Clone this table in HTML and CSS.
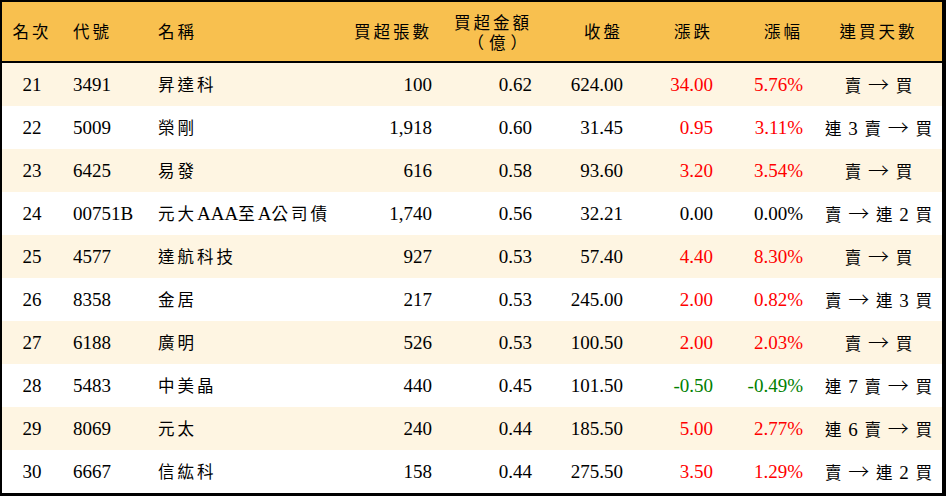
FILE: index.html
```html
<!DOCTYPE html>
<html lang="zh-Hant">
<head>
<meta charset="utf-8">
<title>買超排行</title>
<link rel="stylesheet" href="styles.css">
</head>
<body>
<table class="rank">
  <colgroup>
    <col class="w-rank"><col class="w-code"><col class="w-name"><col class="w-vol"><col class="w-amt"><col class="w-close"><col class="w-chg"><col class="w-pct"><col class="w-days">
  </colgroup>
  <thead>
    <tr>
      <th class="ctr"><span class="zh">名次</span></th>
      <th class="lft pl-code"><span class="zh">代號</span></th>
      <th class="lft pl-name"><span class="zh">名稱</span></th>
      <th class="rgt"><span class="zh">買超張數</span></th>
      <th class="rgt"><span class="hl zh">買超金額</span><span class="hl zh paren">（億）</span></th>
      <th class="rgt"><span class="zh">收盤</span></th>
      <th class="rgt"><span class="zh">漲跌</span></th>
      <th class="rgt"><span class="zh">漲幅</span></th>
      <th class="days"><span class="zh">連買天數</span></th>
    </tr>
  </thead>
  <tbody>
    <tr class="alt">
      <td class="ctr">21</td><td class="lft pl-code">3491</td><td class="lft pl-name"><span class="zh">昇達科</span></td>
      <td class="rgt">100</td><td class="rgt">0.62</td><td class="rgt">624.00</td>
      <td class="rgt up">34.00</td><td class="rgt up">5.76%</td>
      <td class="days"><span class="zh">賣</span> <span class="arr">→</span> <span class="zh">買</span></td>
    </tr>
    <tr>
      <td class="ctr">22</td><td class="lft pl-code">5009</td><td class="lft pl-name"><span class="zh">榮剛</span></td>
      <td class="rgt">1,918</td><td class="rgt">0.60</td><td class="rgt">31.45</td>
      <td class="rgt up">0.95</td><td class="rgt up">3.11%</td>
      <td class="days"><span class="zh">連</span> 3 <span class="zh">賣</span> <span class="arr">→</span> <span class="zh">買</span></td>
    </tr>
    <tr class="alt">
      <td class="ctr">23</td><td class="lft pl-code">6425</td><td class="lft pl-name"><span class="zh">易發</span></td>
      <td class="rgt">616</td><td class="rgt">0.58</td><td class="rgt">93.60</td>
      <td class="rgt up">3.20</td><td class="rgt up">3.54%</td>
      <td class="days"><span class="zh">賣</span> <span class="arr">→</span> <span class="zh">買</span></td>
    </tr>
    <tr>
      <td class="ctr">24</td><td class="lft pl-code">00751B</td><td class="lft pl-name"><span class="zh">元大</span>AAA<span class="zh">至</span>A<span class="zh">公司債</span></td>
      <td class="rgt">1,740</td><td class="rgt">0.56</td><td class="rgt">32.21</td>
      <td class="rgt">0.00</td><td class="rgt">0.00%</td>
      <td class="days"><span class="zh">賣</span> <span class="arr">→</span> <span class="zh">連</span> 2 <span class="zh">買</span></td>
    </tr>
    <tr class="alt">
      <td class="ctr">25</td><td class="lft pl-code">4577</td><td class="lft pl-name"><span class="zh">達航科技</span></td>
      <td class="rgt">927</td><td class="rgt">0.53</td><td class="rgt">57.40</td>
      <td class="rgt up">4.40</td><td class="rgt up">8.30%</td>
      <td class="days"><span class="zh">賣</span> <span class="arr">→</span> <span class="zh">買</span></td>
    </tr>
    <tr>
      <td class="ctr">26</td><td class="lft pl-code">8358</td><td class="lft pl-name"><span class="zh">金居</span></td>
      <td class="rgt">217</td><td class="rgt">0.53</td><td class="rgt">245.00</td>
      <td class="rgt up">2.00</td><td class="rgt up">0.82%</td>
      <td class="days"><span class="zh">賣</span> <span class="arr">→</span> <span class="zh">連</span> 3 <span class="zh">買</span></td>
    </tr>
    <tr class="alt">
      <td class="ctr">27</td><td class="lft pl-code">6188</td><td class="lft pl-name"><span class="zh">廣明</span></td>
      <td class="rgt">526</td><td class="rgt">0.53</td><td class="rgt">100.50</td>
      <td class="rgt up">2.00</td><td class="rgt up">2.03%</td>
      <td class="days"><span class="zh">賣</span> <span class="arr">→</span> <span class="zh">買</span></td>
    </tr>
    <tr>
      <td class="ctr">28</td><td class="lft pl-code">5483</td><td class="lft pl-name"><span class="zh">中美晶</span></td>
      <td class="rgt">440</td><td class="rgt">0.45</td><td class="rgt">101.50</td>
      <td class="rgt down">-0.50</td><td class="rgt down">-0.49%</td>
      <td class="days"><span class="zh">連</span> 7 <span class="zh">賣</span> <span class="arr">→</span> <span class="zh">買</span></td>
    </tr>
    <tr class="alt">
      <td class="ctr">29</td><td class="lft pl-code">8069</td><td class="lft pl-name"><span class="zh">元太</span></td>
      <td class="rgt">240</td><td class="rgt">0.44</td><td class="rgt">185.50</td>
      <td class="rgt up">5.00</td><td class="rgt up">2.77%</td>
      <td class="days"><span class="zh">連</span> 6 <span class="zh">賣</span> <span class="arr">→</span> <span class="zh">買</span></td>
    </tr>
    <tr>
      <td class="ctr">30</td><td class="lft pl-code">6667</td><td class="lft pl-name"><span class="zh">信紘科</span></td>
      <td class="rgt">158</td><td class="rgt">0.44</td><td class="rgt">275.50</td>
      <td class="rgt up">3.50</td><td class="rgt up">1.29%</td>
      <td class="days"><span class="zh">賣</span> <span class="arr">→</span> <span class="zh">連</span> 2 <span class="zh">買</span></td>
    </tr>
  </tbody>
</table>
</body>
</html>
```

FILE: styles.css
```css
html, body {
  margin: 0;
  padding: 0;
  background: #ffffff;
}

body {
  font-family: "Liberation Serif", "Noto Sans CJK TC", serif;
  font-size: 19px;
  color: #000000;
}

.rank {
  width: 946px;
  border-collapse: separate;
  border-spacing: 0;
  table-layout: fixed;
  border-style: solid;
  border-color: #000000;
  border-width: 2px 4px 4px 2px;
  box-sizing: border-box;
}

.w-rank { width: 60px; }
.w-code { width: 86px; }
.w-name { width: 192px; }
.w-vol { width: 102px; }
.w-amt { width: 100px; }
.w-close { width: 91px; }
.w-chg { width: 90px; }
.w-pct { width: 90px; }
.w-days { width: 129px; }

.rank th {
  background: #f8c04f;
  height: 59px;
  padding: 0 10px 0 0;
  font-weight: normal;
  line-height: 20px;
  border-bottom: 2px solid #000000;
  vertical-align: middle;
}

.rank td {
  height: 43px;
  padding: 0 10px 0 0;
  line-height: 20px;
  vertical-align: middle;
  white-space: nowrap;
}

.rank tr.alt td {
  background: #fef5e2;
}

.zh {
  font-family: "Noto Sans CJK TC", "Liberation Serif", sans-serif;
  font-size: 16.5px;
  letter-spacing: 3px;
}

.hl {
  display: block;
  height: 20px;
  line-height: 20px;
}

.paren {
  letter-spacing: 5px;
}

.arr {
  font-family: "Noto Sans CJK TC", "DejaVu Sans", sans-serif;
  font-size: 21px;
  font-weight: 300;
}

.ctr { text-align: center; padding-right: 0 !important; }
.lft { text-align: left; }
.rgt { text-align: right; }

.days {
  text-align: center;
  padding: 0 0 0 2px !important;
}

td.days {
  word-spacing: 2px;
}

td.days .zh {
  letter-spacing: 0;
}

.pl-code { padding-left: 11px !important; }
.pl-name { padding-left: 10px !important; }

.up { color: #ff0000; }
.down { color: #008000; }
```
